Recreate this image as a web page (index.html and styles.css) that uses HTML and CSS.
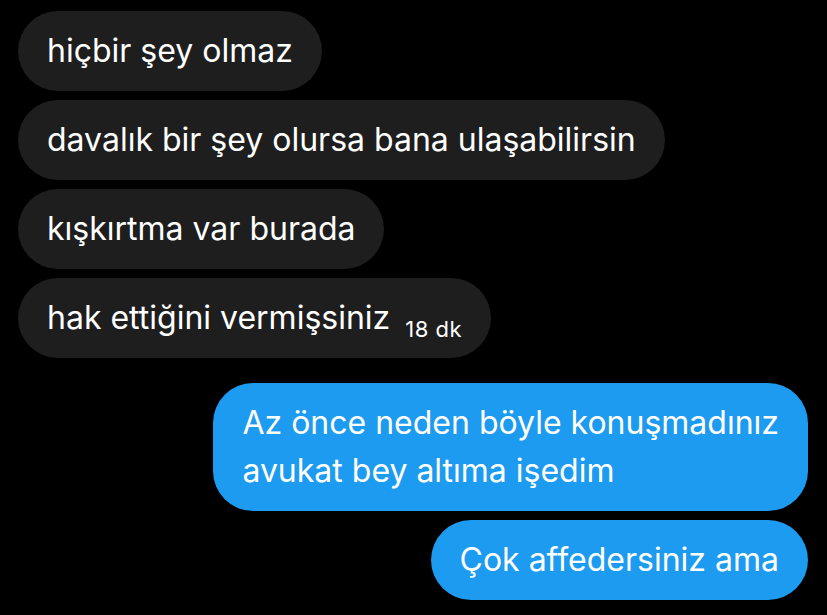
FILE: index.html
```html
<!DOCTYPE html>
<html lang="tr">
<head>
  <meta charset="UTF-8">
  <meta name="viewport" content="width=device-width, initial-scale=1.0">
  <title>Mesajlar</title>
  <link rel="stylesheet" href="styles.css">
</head>
<body>
  <div class="chat">
    <div class="msg in">hiçbir şey olmaz</div>
    <div class="msg in">davalık bir şey olursa bana ulaşabilirsin</div>
    <div class="msg in">kışkırtma var burada</div>
    <div class="msg in">hak ettiğini vermişsiniz<span class="time">18 dk</span></div>
    <div class="msg out">Az önce neden böyle konuşmadınız<br>avukat bey altıma işedim</div>
    <div class="msg out">Çok affedersiniz ama</div>
  </div>
</body>
</html>
```

FILE: styles.css
```css
* {
  padding: 0;
  margin: 0;
  box-sizing: border-box;
}

body {
  background-color: #000;
  font-family: Inter, Roboto, "Liberation Sans", sans-serif;
  color: #fff;
}

.chat {
  display: flex;
  flex-direction: column;
  gap: 9px;
  padding: 11px 19px 0 18px;
}

.msg {
  font-size: 32px;
  line-height: 48px;
  padding: 16px 29px;
  border-radius: 40px;
  max-width: 680px;
}

.msg.in {
  align-self: flex-start;
  background-color: #1e1e1e;
}

.msg.out {
  align-self: flex-end;
  background-color: #1d9bf0;
}

.msg.in + .msg.out {
  margin-top: 16px;
}

.time {
  font-size: 22px;
  line-height: 0;
  letter-spacing: 0.5px;
  margin-left: 15px;
  vertical-align: -8px;
}
```
